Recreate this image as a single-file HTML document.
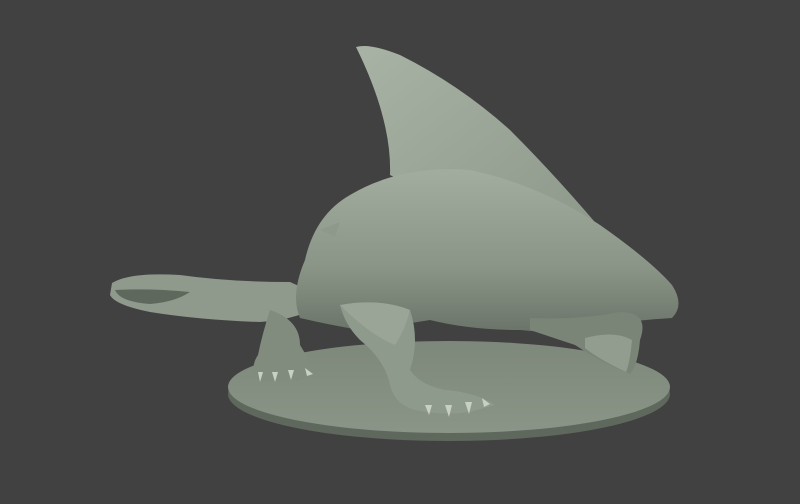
<!DOCTYPE html>
<html><head><style>html,body{margin:0;padding:0;background:#414141;width:800px;height:504px;overflow:hidden}</style></head>
<body>
<svg width="800" height="504" viewBox="0 0 800 504" xmlns="http://www.w3.org/2000/svg">
<defs>
<linearGradient id="body" x1="0" y1="0" x2="0" y2="1"><stop offset="0" stop-color="#a2ad9f"/><stop offset="0.6" stop-color="#8a9587"/><stop offset="1" stop-color="#6b7469"/></linearGradient>
<linearGradient id="fin" x1="0" y1="0" x2="1" y2="1"><stop offset="0" stop-color="#a8b3a5"/><stop offset="1" stop-color="#8c9789"/></linearGradient>
<linearGradient id="base" x1="0" y1="0" x2="0" y2="1"><stop offset="0" stop-color="#7d887b"/><stop offset="1" stop-color="#8a9588"/></linearGradient>
</defs>
<rect width="800" height="504" fill="#414141"/>
<ellipse cx="449" cy="394" rx="221" ry="47" fill="#5f685d"/>
<ellipse cx="449" cy="387" rx="221" ry="46" fill="url(#base)"/>
<path d="M112 283 Q130 272 180 275 Q230 282 290 282 L330 300 Q300 320 260 322 Q200 320 150 312 Q115 305 110 295 Z" fill="#8f9a8c"/>
<path d="M115 290 Q150 288 190 292 Q175 302 150 304 Q120 302 115 290Z" fill="#5f685d"/>
<path d="M270 310 Q300 320 300 345 Q310 362 318 372 L300 380 L260 382 Q248 370 258 355 Q262 335 270 310Z" fill="#818c7f"/>
<path d="M356 47 Q370 43 400 55 Q460 85 510 130 Q560 180 610 240 Q560 250 470 210 Q420 190 390 175 Q392 120 356 47Z" fill="url(#fin)"/>
<path d="M305 260 Q315 215 350 195 Q400 165 470 170 Q540 185 600 225 Q650 260 672 285 Q685 305 672 318 Q640 320 600 325 Q560 335 520 330 Q470 330 430 320 Q400 325 360 330 Q330 325 300 318 Q290 295 305 260 Z" fill="url(#body)"/>
<path d="M320 230 l20 -8 l-5 15z" fill="#8e998b"/>
<path d="M530 318 Q580 320 620 312 Q650 312 640 340 Q638 365 630 374 Q600 362 575 345 Q548 336 530 330Z" fill="#7a8578"/>
<path d="M585 338 Q615 330 632 340 Q630 362 626 372 Q600 360 585 348Z" fill="#929d90"/>
<path d="M340 305 Q380 298 410 310 Q420 340 410 370 Q420 385 445 390 Q475 392 495 405 L470 412 Q440 416 415 410 Q395 405 390 385 Q385 360 360 340 Q345 325 340 305Z" fill="#8e9a8b"/>
<path d="M340 305 Q380 298 410 310 Q405 330 395 345 Q370 335 340 305Z" fill="#9aa597"/>
<g fill="#c8cfc5">
<path d="M425 405 l4 10 l3 -10z"/><path d="M445 405 l4 12 l3 -12z"/><path d="M465 402 l4 12 l3 -12z"/><path d="M482 398 l8 6 l-6 3z"/>
<path d="M258 372 l2 10 l3 -10z"/><path d="M272 372 l3 10 l3 -10z"/><path d="M288 370 l3 10 l3 -10z"/><path d="M305 368 l8 6 l-6 2z"/>
</g>
</svg>
</body></html>
